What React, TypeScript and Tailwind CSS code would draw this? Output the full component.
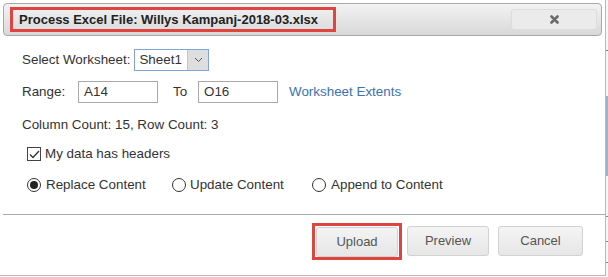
import React from "react";

function Radio({ checked }: { checked?: boolean }) {
  return (
    <span className="w-[14px] h-[14px] rounded-full border border-[#333] bg-white flex items-center justify-center shrink-0">
      {checked && <span className="w-[8px] h-[8px] rounded-full bg-[#222]" />}
    </span>
  );
}

function Btn({ label }: { label: string }) {
  return (
    <button className="h-[30px] rounded-[3px] border border-[#d2d2d2] bg-gradient-to-b from-[#f4f4f4] to-[#e6e6e6] text-[13px] text-[#555] w-full">
      {label}
    </button>
  );
}

export default function App() {
  return (
    <div className="w-[608px] h-[277px] bg-white flex overflow-hidden text-[#333] font-['Liberation_Sans',Arial,sans-serif] text-[13.4px]">
      <div className="w-[606px] h-[276px] border-r border-b border-[#b9b9b9] flex flex-col shrink-0">
        <div className="mx-[3px] mt-[3px] h-[33px] rounded-[4px] border border-[#a9a9a9] bg-gradient-to-b from-[#f3f3f3] to-[#d8d8d8] flex items-center pl-[6px] pr-[4px]">
          <div className="h-[25px] border-[3px] border-[#e0443f] flex items-center pl-[6px] pr-[15px] font-bold text-[13px] text-[#222]">
            Process Excel File: Willys Kampanj-2018-03.xlsx
          </div>
          <button className="ml-auto w-[86px] h-[21px] rounded-[3px] border border-[#dcdcdc] bg-[#ebebeb] flex items-center justify-center">
            <svg width="9" height="9" viewBox="0 0 9 9">
              <path d="M1.5 1.5 L7.5 7.5 M7.5 1.5 L1.5 7.5" stroke="#6a6a6a" strokeWidth="2.6" strokeLinecap="round" />
            </svg>
          </button>
        </div>

        <div className="flex-1 pl-[22px] pt-[13px]">
          <div className="h-[22px] flex items-center">
            <span>Select Worksheet:</span>
            <div className="ml-[4px] h-[22px] w-[75px] border border-[#7ea6d3] flex">
              <span className="flex-1 flex items-center pl-[4px]">Sheet1</span>
              <span className="w-[21px] bg-[#dedede] border-l border-[#c4c4c4] flex items-center justify-center">
                <svg width="9" height="6" viewBox="0 0 9 6">
                  <path d="M1 1 L4.5 4.5 L8 1" stroke="#555" strokeWidth="1" fill="none" />
                </svg>
              </span>
            </div>
          </div>

          <div className="mt-[10px] h-[22px] flex items-center">
            <span className="w-[56px]">Range:</span>
            <div className="w-[80px] h-[22px] border border-[#a8a8a8] flex items-center pl-[5px]">A14</div>
            <span className="ml-[15px] w-[25px]">To</span>
            <div className="w-[80px] h-[22px] border border-[#a8a8a8] flex items-center pl-[5px]">O16</div>
            <span className="ml-[11px] text-[#3b72ad]">Worksheet Extents</span>
          </div>

          <div className="mt-[14px] h-[16px] flex items-center">Column Count: 15, Row Count: 3</div>

          <div className="mt-[13px] h-[16px] flex items-center pl-[5px]">
            <span className="w-[14px] h-[14px] border border-[#444] bg-white flex items-center justify-center">
              <svg width="11" height="9" viewBox="0 0 11 9">
                <path d="M1 4.5 L4 7.5 L10 1" stroke="#333" strokeWidth="1.3" fill="none" />
              </svg>
            </span>
            <span className="ml-[4px]">My data has headers</span>
          </div>

          <div className="mt-[15px] h-[16px] flex items-center pl-[5px]">
            <Radio checked />
            <span className="ml-[5px] w-[126px]">Replace Content</span>
            <Radio />
            <span className="ml-[4px] w-[122px]">Update Content</span>
            <Radio />
            <span className="ml-[5px]">Append to Content</span>
          </div>
        </div>

        <div className="ml-[3px] h-[61px] border-t border-[#a9a9a9] flex items-start justify-end pr-[22px] pt-[8px]">
          <div className="w-[90px] h-[37px] border-[3px] border-[#e0443f] flex items-center px-[1px]">
            <Btn label="Upload" />
          </div>
          <div className="ml-[5px] mt-[3px] w-[82px]">
            <Btn label="Preview" />
          </div>
          <div className="ml-[9px] mt-[3px] w-[85px]">
            <Btn label="Cancel" />
          </div>
        </div>
      </div>
      <div className="w-[2px] h-full bg-[#f7f7f7] flex flex-col">
        <div className="h-[50px]" />
        <div className="h-px bg-[#777]" />
        <div className="h-[80px] mt-[45px] bg-[#9fb3c8]" />
        <div className="h-px mt-[40px] bg-[#888]" />
        <div className="h-px mt-[24px] bg-[#888]" />
        <div className="h-px mt-[20px] bg-[#888]" />
      </div>
    </div>
  );
}
